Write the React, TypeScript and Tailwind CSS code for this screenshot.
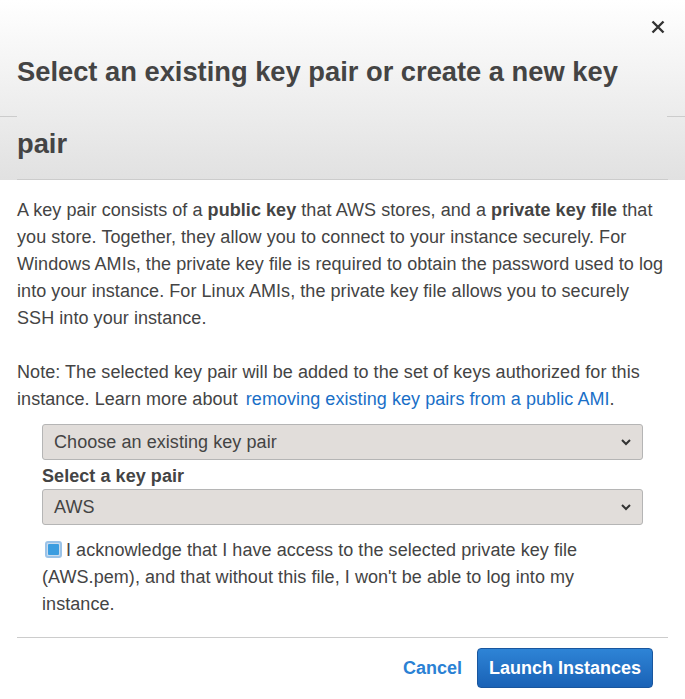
export default function App() {
  return (
    <div
      className="w-[685px] h-[699px] bg-white text-[#444] overflow-hidden"
      style={{ fontFamily: '"Liberation Sans", Arial, sans-serif' }}
    >
      {/* header */}
      <div className="relative h-[180px] bg-gradient-to-b from-white to-[#e1e1e1] px-[17px] pt-[36px]">
        <div className="absolute left-0 top-[116px] w-[17px] h-px bg-[#ccc]" />
        <div className="absolute right-0 top-[116px] w-[18px] h-px bg-[#ccc]" />
        <button className="absolute right-[20px] top-[20px]">
          <svg width="14" height="14" viewBox="0 0 14 14">
            <path d="M1.5 1.5l11 11M12.5 1.5l-11 11" stroke="#333" strokeWidth="2.4" fill="none" />
          </svg>
        </button>
        <h4 className="text-[27.3px] font-bold leading-[71.5px] text-[#444] border-b border-[#ccc] pr-[40px]">
          Select an existing key pair or create a new key pair
        </h4>
      </div>

      {/* body */}
      <div className="px-[17px] pt-[17px] text-[18px] leading-[27px] tracking-[0.06px]">
        <p>
          A key pair consists of a <b>public key</b> that AWS stores, and a <b>private key file</b> that
          you store. Together, they allow you to connect to your instance securely. For Windows AMIs,
          the private key file is required to obtain the password used to log into your instance. For
          Linux AMIs, the private key file allows you to securely{' '}
          <br />
          SSH into your instance.
        </p>
        <p className="mt-[27px]">
          Note: The selected key pair will be added to the set of keys authorized for this instance.
          Learn more about{' '}
          <a className="text-[#1a6fc7] ml-[3px]">removing existing key pairs from a public AMI</a>.
        </p>

        <div className="mx-[25px] mt-[11px]">
          <Select value="Choose an existing key pair" />
          <div className="font-bold mt-[3px] leading-[26px]">Select a key pair</div>
          <Select value="AWS" />
          <p className="mt-[12px] leading-[27px]">
            <span className="inline-block align-[-2px] ml-[3px] mr-[4px] w-[17px] h-[17px] rounded-[3px] border-2 border-[#9bc3e8] bg-[#c9dcee] p-px">
              <span className="block w-full h-full bg-[#3b9de0] rounded-[1px]" />
            </span>
            I acknowledge that I have access to the selected private key file (AWS.pem), and that
            without this file, I won't be able to log into my instance.
          </p>
        </div>

        <div className="mt-[19px] border-t border-[#ccc]" />
        <div className="flex justify-end items-center gap-[15px] pt-[10px] pr-[15px] tracking-normal">
          <button className="text-[#2a81d4] font-bold text-[18px]">Cancel</button>
          <button className="h-[40px] px-[11px] rounded-[4px] bg-gradient-to-b from-[#2e84d6] to-[#1a62b6] border border-[#19569e] text-white font-bold text-[18px]">
            Launch Instances
          </button>
        </div>
      </div>
    </div>
  );
}

function Select({ value }: { value: string }) {
  return (
    <div className="h-[36px] flex items-center justify-between pl-[11px] pr-[9px] bg-[#e1ddda] border border-[#b5b5b5] rounded-[3px] text-[#444]">
      <span>{value}</span>
      <svg width="12" height="8" viewBox="0 0 12 8" className="mr-[1px]">
        <path d="M2 2l4 4 4-4" fill="none" stroke="#333" strokeWidth="2" />
      </svg>
    </div>
  );
}
